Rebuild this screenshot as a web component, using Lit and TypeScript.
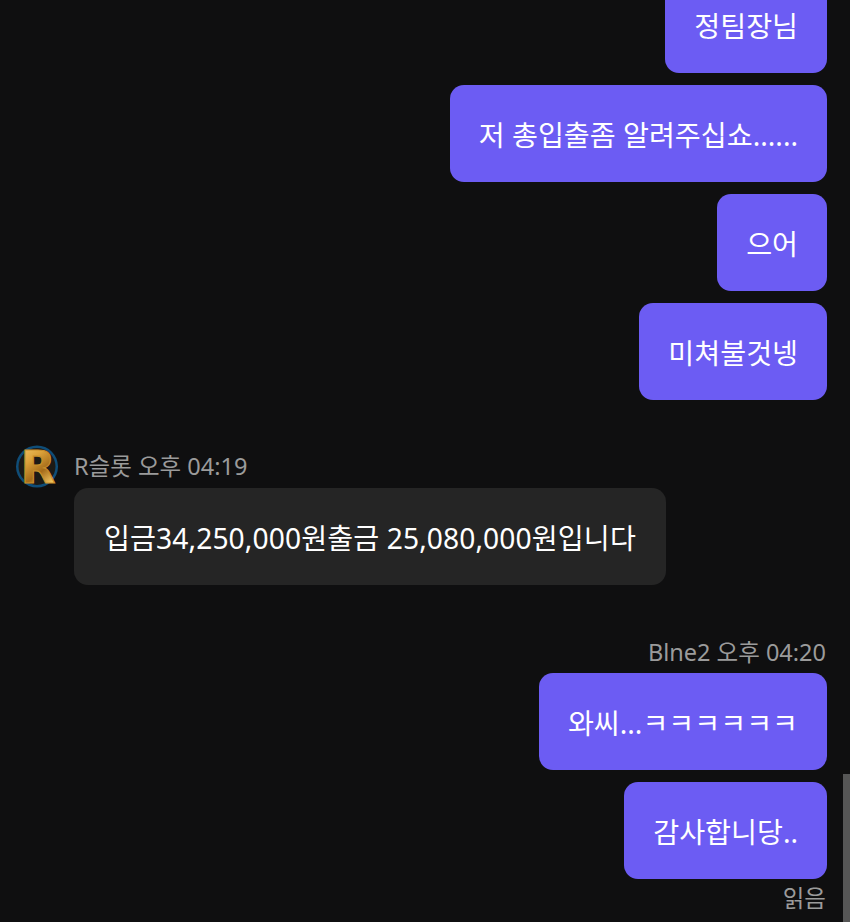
import { LitElement, html, css } from 'lit';
import { customElement } from 'lit/decorators.js';

@customElement('app-root')
export class AppRoot extends LitElement {
  static styles = css`
    :host {
      display: block;
      width: 850px;
      height: 922px;
      background: #0f0f10;
      overflow: hidden;
      position: relative;
      font-family: 'Noto Sans', 'Noto Sans CJK KR', sans-serif;
    }
    .chat {
      height: 922px;
      box-sizing: border-box;
      padding: 0 23px 8px 16px;
      display: flex;
      flex-direction: column;
      justify-content: flex-end;
      align-items: flex-end;
    }
    .chat > * {
      flex-shrink: 0;
    }
    .bubble {
      box-sizing: border-box;
      height: 97px;
      padding: 0 29px;
      display: flex;
      align-items: center;
      border-radius: 14px;
      font-size: 28.2px;
      color: #fff;
      white-space: nowrap;
    }
    .mine {
      background: #6c5cf3;
      margin-top: 12px;
    }
    .theirs {
      background: #252525;
      margin-left: 58px;
      padding: 0 30px;
      letter-spacing: 0.1px;
      align-self: flex-start;
    }
    .meta {
      font-size: 23.5px;
      line-height: 32px;
      color: #9b9b9b;
      white-space: nowrap;
    }
    .head {
      align-self: flex-start;
      display: flex;
      align-items: center;
      gap: 16px;
      margin-top: 44px;
      height: 44px;
    }
    .head-mine {
      margin: 51px 1px -7px 0;
    }
    .avatar {
      width: 42px;
      height: 43px;
      display: block;
      overflow: visible;
    }
    .read {
      margin: 3px 1px 0 0;
    }
    .scrollbar {
      position: absolute;
      right: 0;
      top: 774px;
      width: 7px;
      height: 148px;
      background: #565656;
    }
  `;

  render() {
    return html`
      <div class="chat">
        <div class="bubble mine">정팀장님</div>
        <div class="bubble mine">저 총입출좀 알려주십쇼......</div>
        <div class="bubble mine">으어</div>
        <div class="bubble mine">미쳐불것넹</div>
        <div class="head">
          <svg class="avatar" viewBox="0 0 42 43">
            <defs>
              <linearGradient id="gold" x1="0" y1="0" x2="0.5" y2="1">
                <stop offset="0" stop-color="#f6cf73"></stop>
                <stop offset="0.4" stop-color="#dca23a"></stop>
                <stop offset="0.7" stop-color="#a56c1a"></stop>
                <stop offset="1" stop-color="#f4c964"></stop>
              </linearGradient>
            </defs>
            <circle cx="21" cy="21.5" r="21" fill="#0f4d78"></circle>
            <circle cx="21" cy="21.5" r="18.5" fill="#1c1a16"></circle>
            <text x="22" y="38" text-anchor="middle" font-family="'DejaVu Sans', sans-serif"
              font-size="45" font-weight="700" fill="url(#gold)" stroke="#c98f2b" stroke-width="1.2">R</text>
          </svg>
          <div class="meta">R슬롯 오후 04:19</div>
        </div>
        <div class="bubble theirs">입금34,250,000원출금 25,080,000원입니다</div>
        <div class="meta head-mine">Blne2 오후 04:20</div>
        <div class="bubble mine">와씨...ㅋㅋㅋㅋㅋㅋ</div>
        <div class="bubble mine">감사합니당..</div>
        <div class="meta read">읽음</div>
      </div>
      <div class="scrollbar"></div>
    `;
  }
}
